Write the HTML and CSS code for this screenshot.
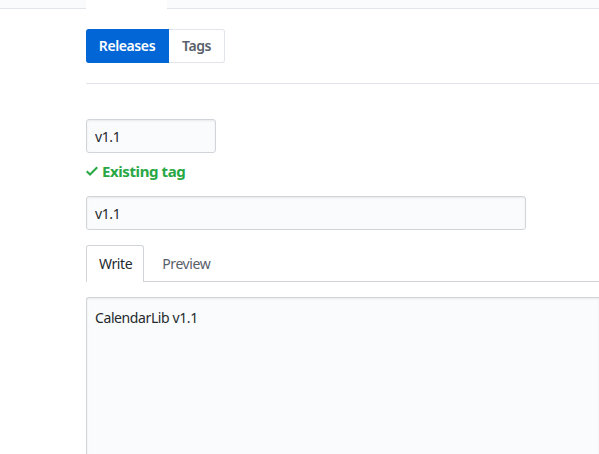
FILE: index.html
```html
<!DOCTYPE html>
<html lang="en">
<head>
<meta charset="UTF-8" />
<title>New release</title>
<link rel="stylesheet" href="styles.css">
</head>
<body>
<!-- Repo nav strip -->
<div class="repo-nav">
  <div class="repo-nav-side"></div>
  <div class="repo-nav-tab"></div>
  <div class="repo-nav-rest"></div>
</div>

<div class="page">
  <!-- Releases / Tags switch -->
  <div class="subnav">
    <div class="btn-group">
      <a class="btn selected">Releases</a>
      <a class="btn">Tags</a>
    </div>
  </div>

  <!-- Release form -->
  <form class="release-form">
    <input type="text" class="form-control tag-input" value="v1.1" />
    <div class="tag-status">
      <svg width="12" height="16" viewBox="0 0 12 16"><path fill="currentColor" fill-rule="evenodd" d="M12 5l-8 8-4-4 1.5-1.5L4 10l6.5-6.5L12 5z"/></svg>
      Existing tag
    </div>
    <input type="text" class="form-control title-input" value="v1.1" />

    <div class="tabnav">
      <div class="tabnav-tab active">Write</div>
      <div class="tabnav-tab">Preview</div>
    </div>
    <textarea class="form-control body-input">CalendarLib v1.1</textarea>
  </form>
</div>
</body>
</html>
```

FILE: styles.css
```css
body {
  margin: 0;
  font-family: "Noto Sans", sans-serif;
  font-size: 14px;
  letter-spacing: -0.4px;
  color: #24292e;
  background: #fff;
}
/* Repo nav strip */
.repo-nav {
  display: flex;
  height: 9px;
}
.repo-nav-side {
  width: 86px;
  background: #fafbfc;
  border-bottom: 1px solid #e1e4e8;
}
.repo-nav-tab {
  width: 81px;
  background: #fff;
}
.repo-nav-rest {
  flex: 1;
  background: #fafbfc;
  border-bottom: 1px solid #e1e4e8;
}
.page {
  padding-left: 86px;
}
/* Subnav */
.subnav {
  padding: 20px 0 20px;
  border-bottom: 1px solid #e1e4e8;
}
.btn-group {
  display: flex;
}
.btn {
  display: block;
  height: 34px;
  line-height: 32px;
  box-sizing: border-box;
  padding: 0 13px;
  font-weight: 600;
  color: #586069;
  border: 1px solid #e1e4e8;
  border-left: none;
  border-radius: 0 3px 3px 0;
}
.btn.selected {
  width: 83px;
  text-align: center;
  padding: 0;
  color: #fff;
  background: #0366d6;
  border-color: #0366d6;
  border-radius: 3px 0 0 3px;
}
/* Form */
.release-form {
  padding-top: 35px;
}
.form-control {
  display: block;
  box-sizing: border-box;
  height: 34px;
  padding: 6px 8px;
  font-family: inherit;
  font-size: 14px;
  letter-spacing: -0.4px;
  color: #24292e;
  background: #fafbfc;
  border: 1px solid #d1d5da;
  border-radius: 3px;
  box-shadow: inset 0 1px 2px rgba(27,31,35,0.075);
  outline: none;
}
.tag-input {
  width: 130px;
}
.tag-status {
  display: flex;
  align-items: center;
  gap: 4px;
  margin: 8px 0 15px;
  height: 20px;
  font-size: 15px;
  font-weight: 700;
  color: #28a745;
}
.title-input {
  width: 440px;
}
/* Write / Preview tabs */
.tabnav {
  display: flex;
  margin-top: 15px;
  border-bottom: 1px solid #d1d5da;
}
.tabnav-tab {
  height: 35px;
  line-height: 36px;
  padding: 0 12px 0 17px;
  color: #586069;
  border: 1px solid transparent;
  border-bottom: none;
  border-radius: 3px 3px 0 0;
  margin-bottom: -1px;
}
.tabnav-tab.active {
  padding: 0 11px 0 12px;
  color: #24292e;
  background: #fff;
  border-color: #d1d5da;
  height: 36px;
}
.body-input {
  width: 100%;
  height: 200px;
  margin-top: 15px;
  padding: 10px 8px;
  border-right: none;
  border-radius: 3px 0 0 3px;
  resize: none;
  line-height: 20px;
}
```
